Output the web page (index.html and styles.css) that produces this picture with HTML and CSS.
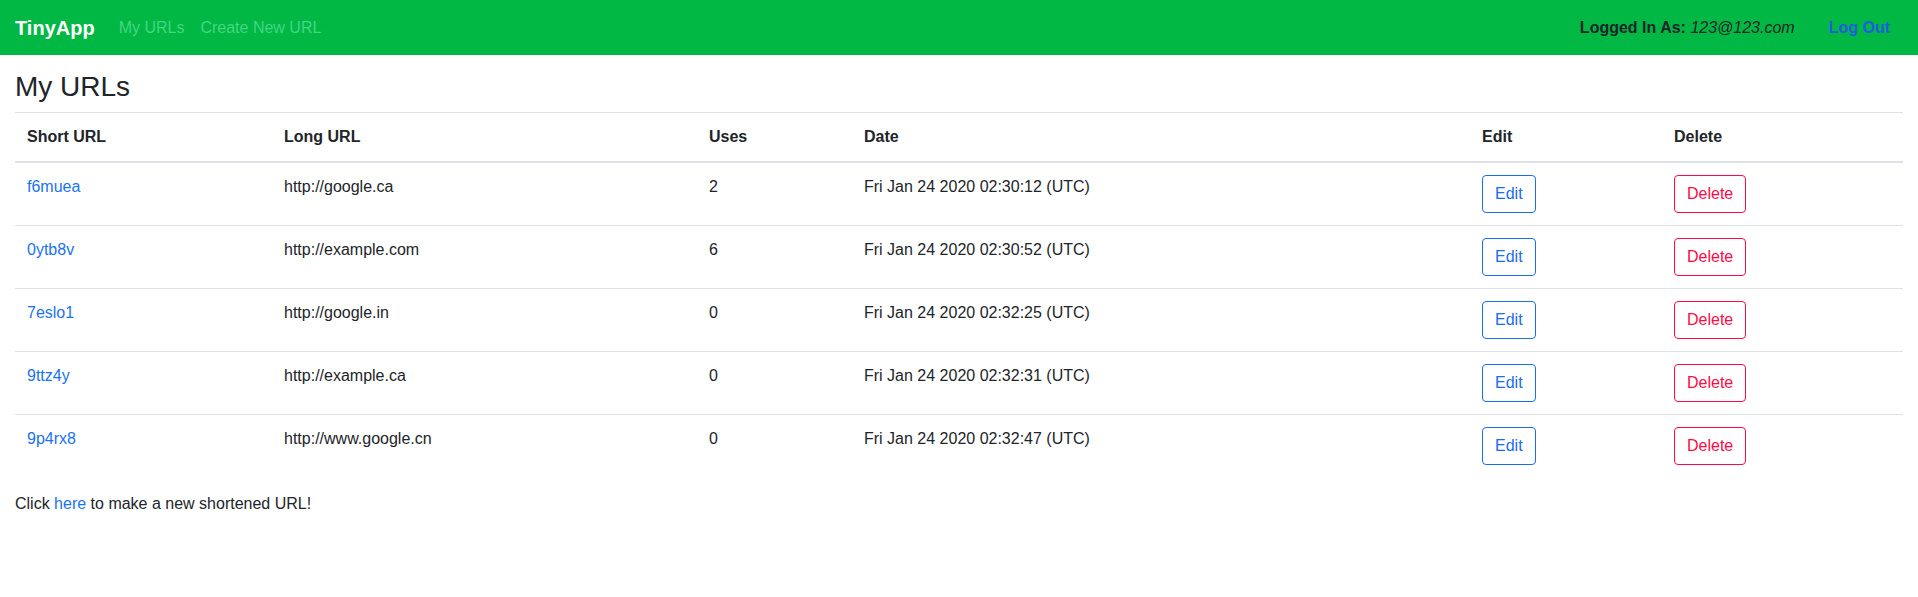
FILE: index.html
```html
<!DOCTYPE html>
<html>
<head>
<meta charset="utf-8">
<title>TinyApp</title>
<link rel="stylesheet" href="styles.css">
</head>
<body>
<nav class="navbar">
  <div class="nav-left">
    <a class="brand" href="#">TinyApp</a>
    <a class="nav-link" href="#">My URLs</a>
    <a class="nav-link" href="#">Create New URL</a>
  </div>
  <div class="nav-right">
    <span class="user"><b>Logged In As:</b> <i>123@123.com</i></span>
    <button class="logout">Log Out</button>
  </div>
</nav>
<main class="container">
  <h3 class="title">My URLs</h3>
  <table class="table">
    <colgroup>
      <col class="c1"><col class="c2"><col class="c3"><col class="c4"><col class="c5"><col class="c6">
    </colgroup>
    <thead>
      <tr><th>Short URL</th><th>Long URL</th><th>Uses</th><th>Date</th><th>Edit</th><th>Delete</th></tr>
    </thead>
    <tbody>
      <tr><td><a href="#">f6muea</a></td><td>http://google.ca</td><td>2</td><td>Fri Jan 24 2020 02:30:12 (UTC)</td><td><button class="btn btn-edit">Edit</button></td><td><button class="btn btn-del">Delete</button></td></tr>
      <tr><td><a href="#">0ytb8v</a></td><td>http://example.com</td><td>6</td><td>Fri Jan 24 2020 02:30:52 (UTC)</td><td><button class="btn btn-edit">Edit</button></td><td><button class="btn btn-del">Delete</button></td></tr>
      <tr><td><a href="#">7eslo1</a></td><td>http://google.in</td><td>0</td><td>Fri Jan 24 2020 02:32:25 (UTC)</td><td><button class="btn btn-edit">Edit</button></td><td><button class="btn btn-del">Delete</button></td></tr>
      <tr><td><a href="#">9ttz4y</a></td><td>http://example.ca</td><td>0</td><td>Fri Jan 24 2020 02:32:31 (UTC)</td><td><button class="btn btn-edit">Edit</button></td><td><button class="btn btn-del">Delete</button></td></tr>
      <tr><td><a href="#">9p4rx8</a></td><td>http://www.google.cn</td><td>0</td><td>Fri Jan 24 2020 02:32:47 (UTC)</td><td><button class="btn btn-edit">Edit</button></td><td><button class="btn btn-del">Delete</button></td></tr>
    </tbody>
  </table>
  <p class="note">Click <a href="#">here</a> to make a new shortened URL!</p>
</main>
</body>
</html>
```
FILE: styles.css
```css
* { box-sizing: border-box; }
html, body { margin: 0; padding: 0; }
body {
  font-family: "Liberation Sans", Arial, sans-serif;
  font-size: 16px;
  line-height: 1.5;
  color: #212529;
  background: #fff;
}
a { color: #1a73f0; text-decoration: none; }

.navbar {
  display: flex;
  align-items: center;
  justify-content: space-between;
  height: 55px;
  padding: 0 16px 0 15px;
  background: #00b843;
}
.nav-left { display: flex; align-items: center; }
.brand {
  color: #fff;
  font-weight: 700;
  font-size: 20px;
  line-height: 30px;
  margin-right: 16px;
}
.nav-link {
  color: #44d585;
  padding: 8px;
}
.nav-right { display: flex; align-items: center; }
.user { color: #212529; }
.user b { font-weight: 700; }
.logout {
  font-family: inherit;
  font-size: 16px;
  font-weight: 700;
  line-height: 24px;
  color: #1f5ee0;
  background: none;
  border: 0;
  padding: 6px 12px 6px 12px;
  margin-left: 22px;
}

.container { padding: 15px 15px 0 15px; }
.title {
  font-size: 28px;
  font-weight: 400;
  line-height: 1.2;
  margin: 0 0 8px 0;
}
.table {
  width: 100%;
  border-collapse: collapse;
  margin-bottom: 15px;
}
.c1 { width: 257px; }
.c2 { width: 425px; }
.c3 { width: 155px; }
.c4 { width: 618px; }
.c5 { width: 192px; }
.c6 { width: 241px; }
.table th, .table td {
  text-align: left;
  vertical-align: top;
  padding: 12px;
  border-top: 1px solid #dee2e6;
}
.table th { font-weight: 700; }
.table thead th { border-bottom: 2px solid #dee2e6; }
.table tbody tr:first-child td { border-top: 0; }

.btn {
  font-family: inherit;
  font-size: 16px;
  line-height: 24px;
  padding: 6px 12px;
  background: #fff;
  border-radius: 4px;
  border: 1px solid;
  cursor: pointer;
}
.btn-edit { color: #1a6cf0; border-color: #1a6cf0; }
.btn-del { color: #ff0a47; border-color: #ff0a47; }
.note { margin: 0 0 16px 0; }
```
